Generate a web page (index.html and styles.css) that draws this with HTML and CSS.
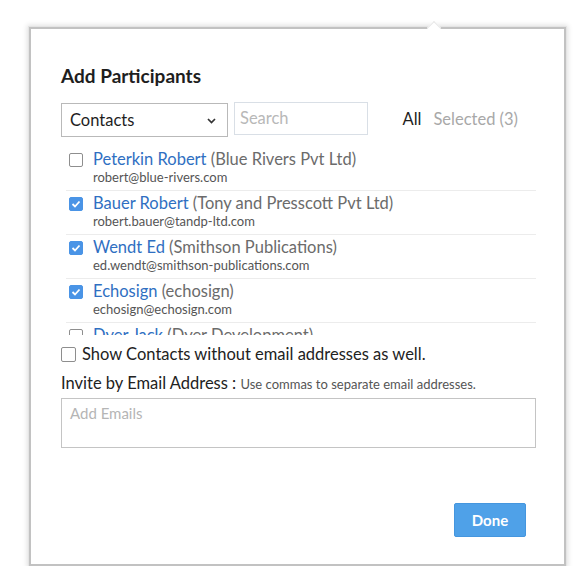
FILE: index.html
```html
<!DOCTYPE html>
<html>
<head>
<meta charset="utf-8">
<link rel="stylesheet" href="styles.css">
</head>
<body>
<div class="dialog">
  <span class="caret"></span>
  <h1 class="title">Add Participants</h1>
  <div class="toolbar">
    <div class="select">
      <span>Contacts</span>
      <svg class="chev" width="9" height="6" viewBox="0 0 9 6"><path d="M1 1l3.5 3.5L8 1" fill="none" stroke="#333" stroke-width="1.7"/></svg>
    </div>
    <div class="search">Search</div>
    <div class="tabs">
      <span class="tab active">All</span>
      <span class="tab">Selected (3)</span>
    </div>
  </div>
  <div class="list">
    <div class="row">
      <span class="cb"></span>
      <div class="info">
        <div class="name"><span class="person">Peterkin Robert</span> (Blue Rivers Pvt Ltd)</div>
        <div class="email">robert@blue-rivers.com</div>
      </div>
    </div>
    <div class="row">
      <span class="cb checked"><svg width="10" height="8" viewBox="0 0 10 8"><path d="M1.5 4l2.5 2.5L8.5 1.5" fill="none" stroke="#fff" stroke-width="1.8"/></svg></span>
      <div class="info">
        <div class="name"><span class="person">Bauer Robert</span> (Tony and Presscott Pvt Ltd)</div>
        <div class="email">robert.bauer@tandp-ltd.com</div>
      </div>
    </div>
    <div class="row">
      <span class="cb checked"><svg width="10" height="8" viewBox="0 0 10 8"><path d="M1.5 4l2.5 2.5L8.5 1.5" fill="none" stroke="#fff" stroke-width="1.8"/></svg></span>
      <div class="info">
        <div class="name"><span class="person">Wendt Ed</span> (Smithson Publications)</div>
        <div class="email">ed.wendt@smithson-publications.com</div>
      </div>
    </div>
    <div class="row">
      <span class="cb checked"><svg width="10" height="8" viewBox="0 0 10 8"><path d="M1.5 4l2.5 2.5L8.5 1.5" fill="none" stroke="#fff" stroke-width="1.8"/></svg></span>
      <div class="info">
        <div class="name"><span class="person">Echosign</span> (echosign)</div>
        <div class="email">echosign@echosign.com</div>
      </div>
    </div>
    <div class="row">
      <span class="cb"></span>
      <div class="info">
        <div class="name"><span class="person">Dyer Jack</span> (Dyer Development)</div>
      </div>
    </div>
  </div>
  <div class="show-row">
    <span class="cb big"></span>
    <span>Show Contacts without email addresses as well.</span>
  </div>
  <div class="invite">Invite by Email Address : <span class="hint">Use commas to separate email addresses.</span></div>
  <div class="emails">Add Emails</div>
  <button class="done">Done</button>
</div>
</body>
</html>
```
FILE: styles.css
```css
html, body {
  margin: 0;
  padding: 0;
  background: #fff;
}
body {
  font-family: Lato, "Noto Sans", "Liberation Sans", sans-serif;
  color: #222;
  padding: 27px 0 0 29px;
}
.dialog {
  position: relative;
  box-sizing: border-box;
  width: 537px;
  height: 539px;
  border: 2px solid #c2c2c2;
  box-shadow: 0 0 0 1px #e4e4e4, 0 0 5px 2px rgba(0, 0, 0, 0.12);
  padding: 36px 28px 0 30px;
  display: flex;
  flex-direction: column;
  background: #fff;
}
.caret {
  position: absolute;
  top: -6px;
  left: 398px;
  width: 9px;
  height: 9px;
  background: #fff;
  transform: rotate(45deg);
  border-top: 1px solid #e8e8e8;
  border-left: 1px solid #e8e8e8;
}
.title {
  margin: 0;
  font-size: 19px;
  line-height: 22px;
  font-weight: 700;
  color: #1e1e1e;
}
.toolbar {
  display: flex;
  align-items: flex-start;
  margin-top: 15px;
  height: 35px;
}
.select {
  box-sizing: border-box;
  width: 167px;
  height: 34px;
  margin-top: 1px;
  border: 1px solid #b9b9b9;
  display: flex;
  align-items: center;
  justify-content: space-between;
  padding: 0 11px 0 8px;
  font-size: 16.5px;
  color: #1e1e1e;
}
.chev {
  margin-top: 2px;
}
.search {
  box-sizing: border-box;
  width: 134px;
  height: 33px;
  margin-left: 6px;
  border: 1px solid #d9dfe6;
  padding: 0 5px;
  line-height: 31px;
  font-size: 16.5px;
  color: #b8b8b8;
}
.tabs {
  margin-left: auto;
  margin-right: 18px;
  display: flex;
  gap: 12px;
  font-size: 16.5px;
  line-height: 34px;
  color: #a8a8a8;
}
.tab.active {
  color: #1e1e1e;
}
.list {
  margin: 10px 0 0 5px;
  height: 188px;
  overflow: hidden;
}
.row {
  box-sizing: border-box;
  height: 44px;
  border-bottom: 1px solid #ececec;
  display: flex;
  align-items: flex-start;
  padding: 3px 0 0 3px;
}
.cb {
  box-sizing: border-box;
  flex: none;
  width: 14px;
  height: 14px;
  border: 1px solid #8e8e8e;
  border-radius: 2px;
  background: #fff;
  margin-top: 3px;
  display: flex;
  align-items: center;
  justify-content: center;
}
.cb.checked {
  background: #4a94e6;
  border-color: #4a94e6;
}
.info {
  margin-left: 10px;
}
.name {
  font-size: 16.5px;
  line-height: 18px;
  color: #6b6b6b;
  white-space: nowrap;
}
.person {
  color: #2f6fc2;
}
.email {
  font-size: 13px;
  line-height: 18px;
  color: #555;
}
.show-row {
  display: flex;
  align-items: center;
  margin-top: 10px;
  height: 18px;
  font-size: 16.5px;
  color: #222;
}
.cb.big {
  width: 15px;
  height: 15px;
  margin: 0 6px 0 0;
}
.invite {
  margin-top: 11px;
  font-size: 16.5px;
  line-height: 18px;
  color: #222;
  white-space: nowrap;
}
.hint {
  font-size: 13px;
  color: #555;
}
.emails {
  box-sizing: border-box;
  margin-top: 5px;
  width: 475px;
  height: 50px;
  border: 1px solid #c4c4c4;
  padding: 5px 8px;
  font-size: 15px;
  line-height: 18px;
  color: #b5b5b5;
}
.done {
  align-self: flex-end;
  margin: 55px 10px 0 0;
  width: 72px;
  height: 34px;
  border: 1px solid #4596de;
  border-radius: 2px;
  background: #4fa1e8;
  color: #fff;
  font-family: Lato, "Noto Sans", "Liberation Sans", sans-serif;
  font-size: 15px;
  font-weight: 700;
  padding: 0;
}
```
